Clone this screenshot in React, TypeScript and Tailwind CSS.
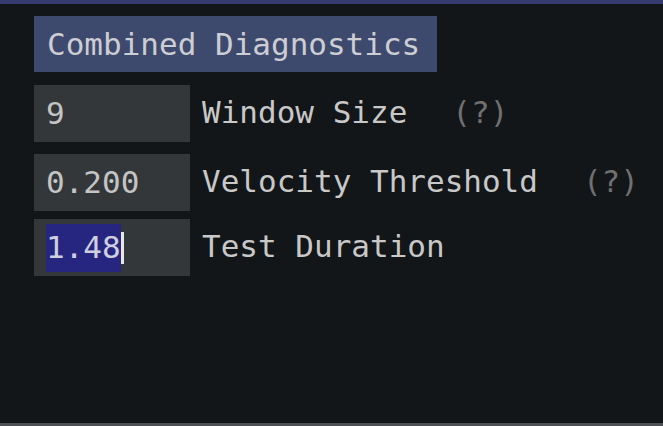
const mono = "font-['DejaVu_Sans_Mono',monospace]";

function Field({ value, label, help, selected }: { value: string; label: string; help?: boolean; selected?: boolean }) {
  return (
    <div className="flex h-[57px] items-center">
      <div className="flex h-full w-[156px] items-center bg-[#333739] px-[12px]">
        {selected ? (
          <div className="flex h-[48px] items-center">
            <span className="flex h-full items-center bg-[#262680] text-[#cfcfe0]">{value}</span>
            <span className="h-[32px] w-[3px] bg-[#e8e8e8]" />
          </div>
        ) : (
          <span className="text-[#c4c4c4]">{value}</span>
        )}
      </div>
      <span className="ml-[12px] -translate-y-px text-[#c8c8c8]">{label}</span>
      {help && <span className="ml-[45px] -translate-y-px text-[#707070]">(?)</span>}
    </div>
  );
}

export default function App() {
  return (
    <div className={`flex h-[426px] w-[663px] flex-col overflow-hidden bg-[#121619] text-[31px] leading-none ${mono}`}>
      <div className="h-[4px] bg-[#363a6e]" />
      <div className="flex flex-1 flex-col pl-[34px] pt-[12px]">
        <div className="flex h-[56px] w-[403px] items-center bg-[#3d4a6d] px-[13px] text-[#cdcdd4]">
          Combined Diagnostics
        </div>
        <div className="mt-[13px]">
          <Field value="9" label="Window Size" help />
        </div>
        <div className="mt-[12px]">
          <Field value="0.200" label="Velocity Threshold" help />
        </div>
        <div className="mt-[8px]">
          <Field value="1.48" label="Test Duration" selected />
        </div>
      </div>
      <div className="h-[3px] bg-[#4d5155]" />
    </div>
  );
}
